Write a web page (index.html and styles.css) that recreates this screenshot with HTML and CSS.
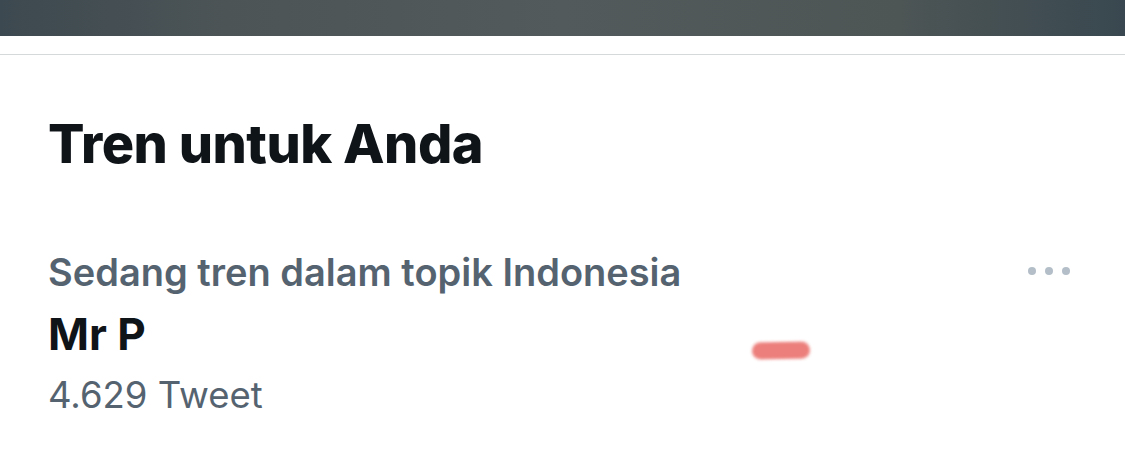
FILE: index.html
```html
<!DOCTYPE html>
<html lang="id">
<head>
<meta charset="utf-8">
<link rel="stylesheet" href="styles.css">
</head>
<body>
<div class="topbar"></div>
<div class="gap"></div>
<main class="panel">
  <h2 class="title">Tren untuk Anda</h2>
  <section class="trend">
    <div class="trend-body">
      <div class="context">Sedang tren dalam topik Indonesia</div>
      <div class="name">Mr P</div>
      <div class="count">4.629 Tweet</div>
    </div>
    <div class="more" aria-label="Lainnya"><span></span><span></span><span></span></div>
    <div class="smudge"></div>
  </section>
</main>
</body>
</html>
```
FILE: styles.css
```css
* { box-sizing: border-box; }
html, body { margin: 0; padding: 0; background: #fff; }
body {
  width: 1125px;
  height: 458px;
  overflow: hidden;
  font-family: Inter, "Liberation Sans", Arial, sans-serif;
  color: #0f1419;
}
.topbar {
  height: 36px;
  background: linear-gradient(90deg, #3d4950 0%, #4c5456 20%, #525a5b 50%, #4d5555 80%, #394850 100%);
}
.gap {
  height: 19px;
  border-bottom: 1px solid #d6d9d9;
}
.panel {
  padding: 0 48px;
}
.title {
  margin: 0;
  padding-top: 54px;
  font-size: 54px;
  line-height: 70px;
  font-weight: 800;
  letter-spacing: -0.5px;
}
.trend {
  position: relative;
  display: flex;
  justify-content: space-between;
  align-items: flex-start;
  padding-top: 71px;
}
.context {
  font-size: 38px;
  line-height: 44px;
  font-weight: 600;
  color: #556370;
}
.name {
  margin-top: 15px;
  font-size: 44px;
  line-height: 50px;
  font-weight: 700;
  color: #0f1419;
}
.count {
  margin-top: 14px;
  font-size: 36.5px;
  line-height: 44px;
  font-weight: 400;
  color: #556370;
}
.more {
  display: flex;
  gap: 9px;
  margin-top: 17px;
  margin-right: 7px;
}
.more span {
  width: 8px;
  height: 8px;
  border-radius: 50%;
  background: #b4bec8;
}
.smudge {
  position: absolute;
  left: 704px;
  top: 163px;
  width: 58px;
  height: 17px;
  border-radius: 9px;
  background: #ea716d;
  filter: blur(1.5px);
  opacity: 0.9;
  transform: rotate(-1deg);
}
```
